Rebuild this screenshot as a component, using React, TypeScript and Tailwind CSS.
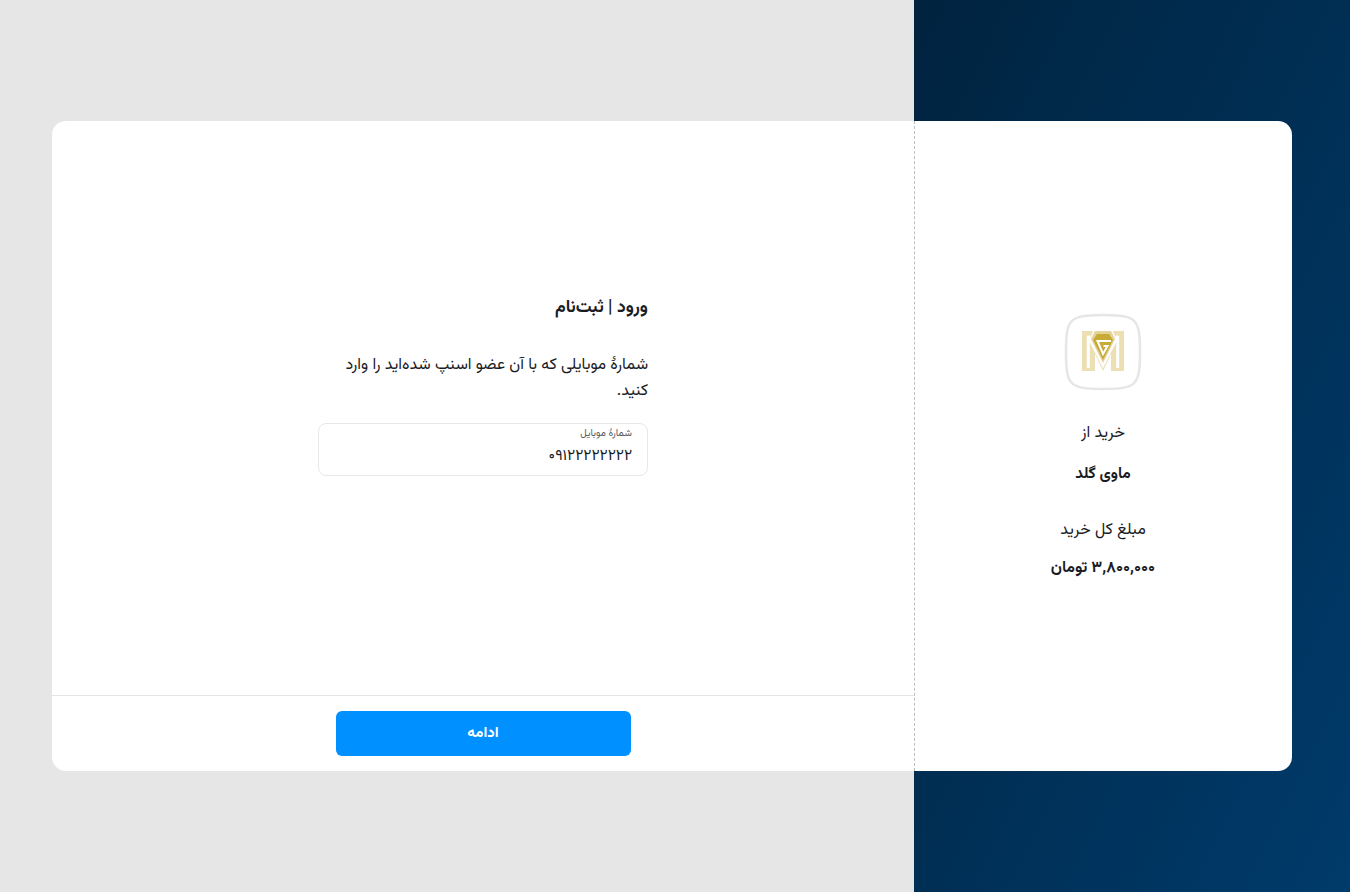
export default function App() {
  return (
    <div
      dir="ltr"
      className="relative h-[892px] w-full overflow-hidden bg-[#e6e6e6] font-['Vazirmatn','DejaVu_Sans',sans-serif] text-[#1a1c24]"
    >
      <div className="absolute inset-y-0 right-0 w-[436px] bg-gradient-to-br from-[#00233f] to-[#003b6b]" />
      <div className="relative flex h-full items-center justify-center pr-[6px]">
        <div className="flex h-[650px] w-[1240px] overflow-hidden rounded-[14px] bg-white">
          <div className="flex w-[862px] flex-col">
            <div className="flex flex-1 flex-col items-center justify-center pb-[46px]">
              <div dir="rtl" className="w-[330px]">
                <h1 className="text-[17.5px] font-bold leading-[28px]">ورود | ثبت‌نام</h1>
                <p className="mt-[31px] text-[16px] leading-[26px]">
                  شمارهٔ موبایلی که با آن عضو اسنپ شده‌اید را وارد کنید.
                </p>
                <div className="mt-[18px] h-[53px] rounded-[8px] border border-[#e8e8e8] px-[15px] pt-[2px]">
                  <div className="text-[10px] leading-[16px] text-[#555a62]">شمارهٔ موبایل</div>
                  <div className="text-[15.5px] leading-[28px]">۰۹۱۲۲۲۲۲۲۲۲</div>
                </div>
              </div>
            </div>
            <div className="flex h-[76px] justify-center border-t border-[#e4e4e4] pt-[15px]">
              <button className="h-[45px] w-[295px] rounded-[6px] bg-[#0090ff] pt-[2px] text-[15px] font-bold text-white">
                ادامه
              </button>
            </div>
          </div>
          <div
            dir="rtl"
            className="flex flex-1 flex-col items-center justify-center border-l border-dashed border-[#bdbdbd] pt-[2px] pr-[1px]"
          >
            <svg width="78" height="78" viewBox="0 0 78 78" className="mb-[31px]">
              <path
                d="M39 2C60 2 67 4 71 9C75 14 76 22 76 39C76 56 75 64 71 69C67 74 60 76 39 76C18 76 11 74 7 69C3 64 2 56 2 39C2 22 3 14 7 9C11 4 18 2 39 2Z"
                fill="#fff"
                stroke="#e6e6e4"
                strokeWidth="2.5"
              />
              {/* M */}
              <path d="M18 18H28L39 30L50 18H60V58H47V41L39 58L31 41V58H18Z" fill="#ecdfb4" />
              <path d="M24.3 55V23L39 52L53.7 23V55" fill="none" stroke="#fff" strokeWidth="3" />
              {/* diamond */}
              <path d="M30 17H48L52 25L39 51L26 25Z" fill="#fff" />
              <path d="M31 18H47L51 26L39 50L27 26Z" fill="#e3d398" />
              <path d="M33 21H45L49 27L39 47L29 27Z" fill="#c8aa36" />
              <path d="M47 28H33.5L39 41L43.5 33H39.5" fill="none" stroke="#fff" strokeWidth="2" />
            </svg>
            <div className="text-[16px] leading-[24px]">خرید از</div>
            <div className="mt-[16px] text-[15.5px] font-bold leading-[24px]">ماوی گلد</div>
            <div className="mt-[33px] text-[16px] leading-[24px]">مبلغ کل خرید</div>
            <div className="mt-[14px] text-[16px] font-bold leading-[24px]">۳,۸۰۰,۰۰۰ تومان</div>
          </div>
        </div>
      </div>
    </div>
  );
}
